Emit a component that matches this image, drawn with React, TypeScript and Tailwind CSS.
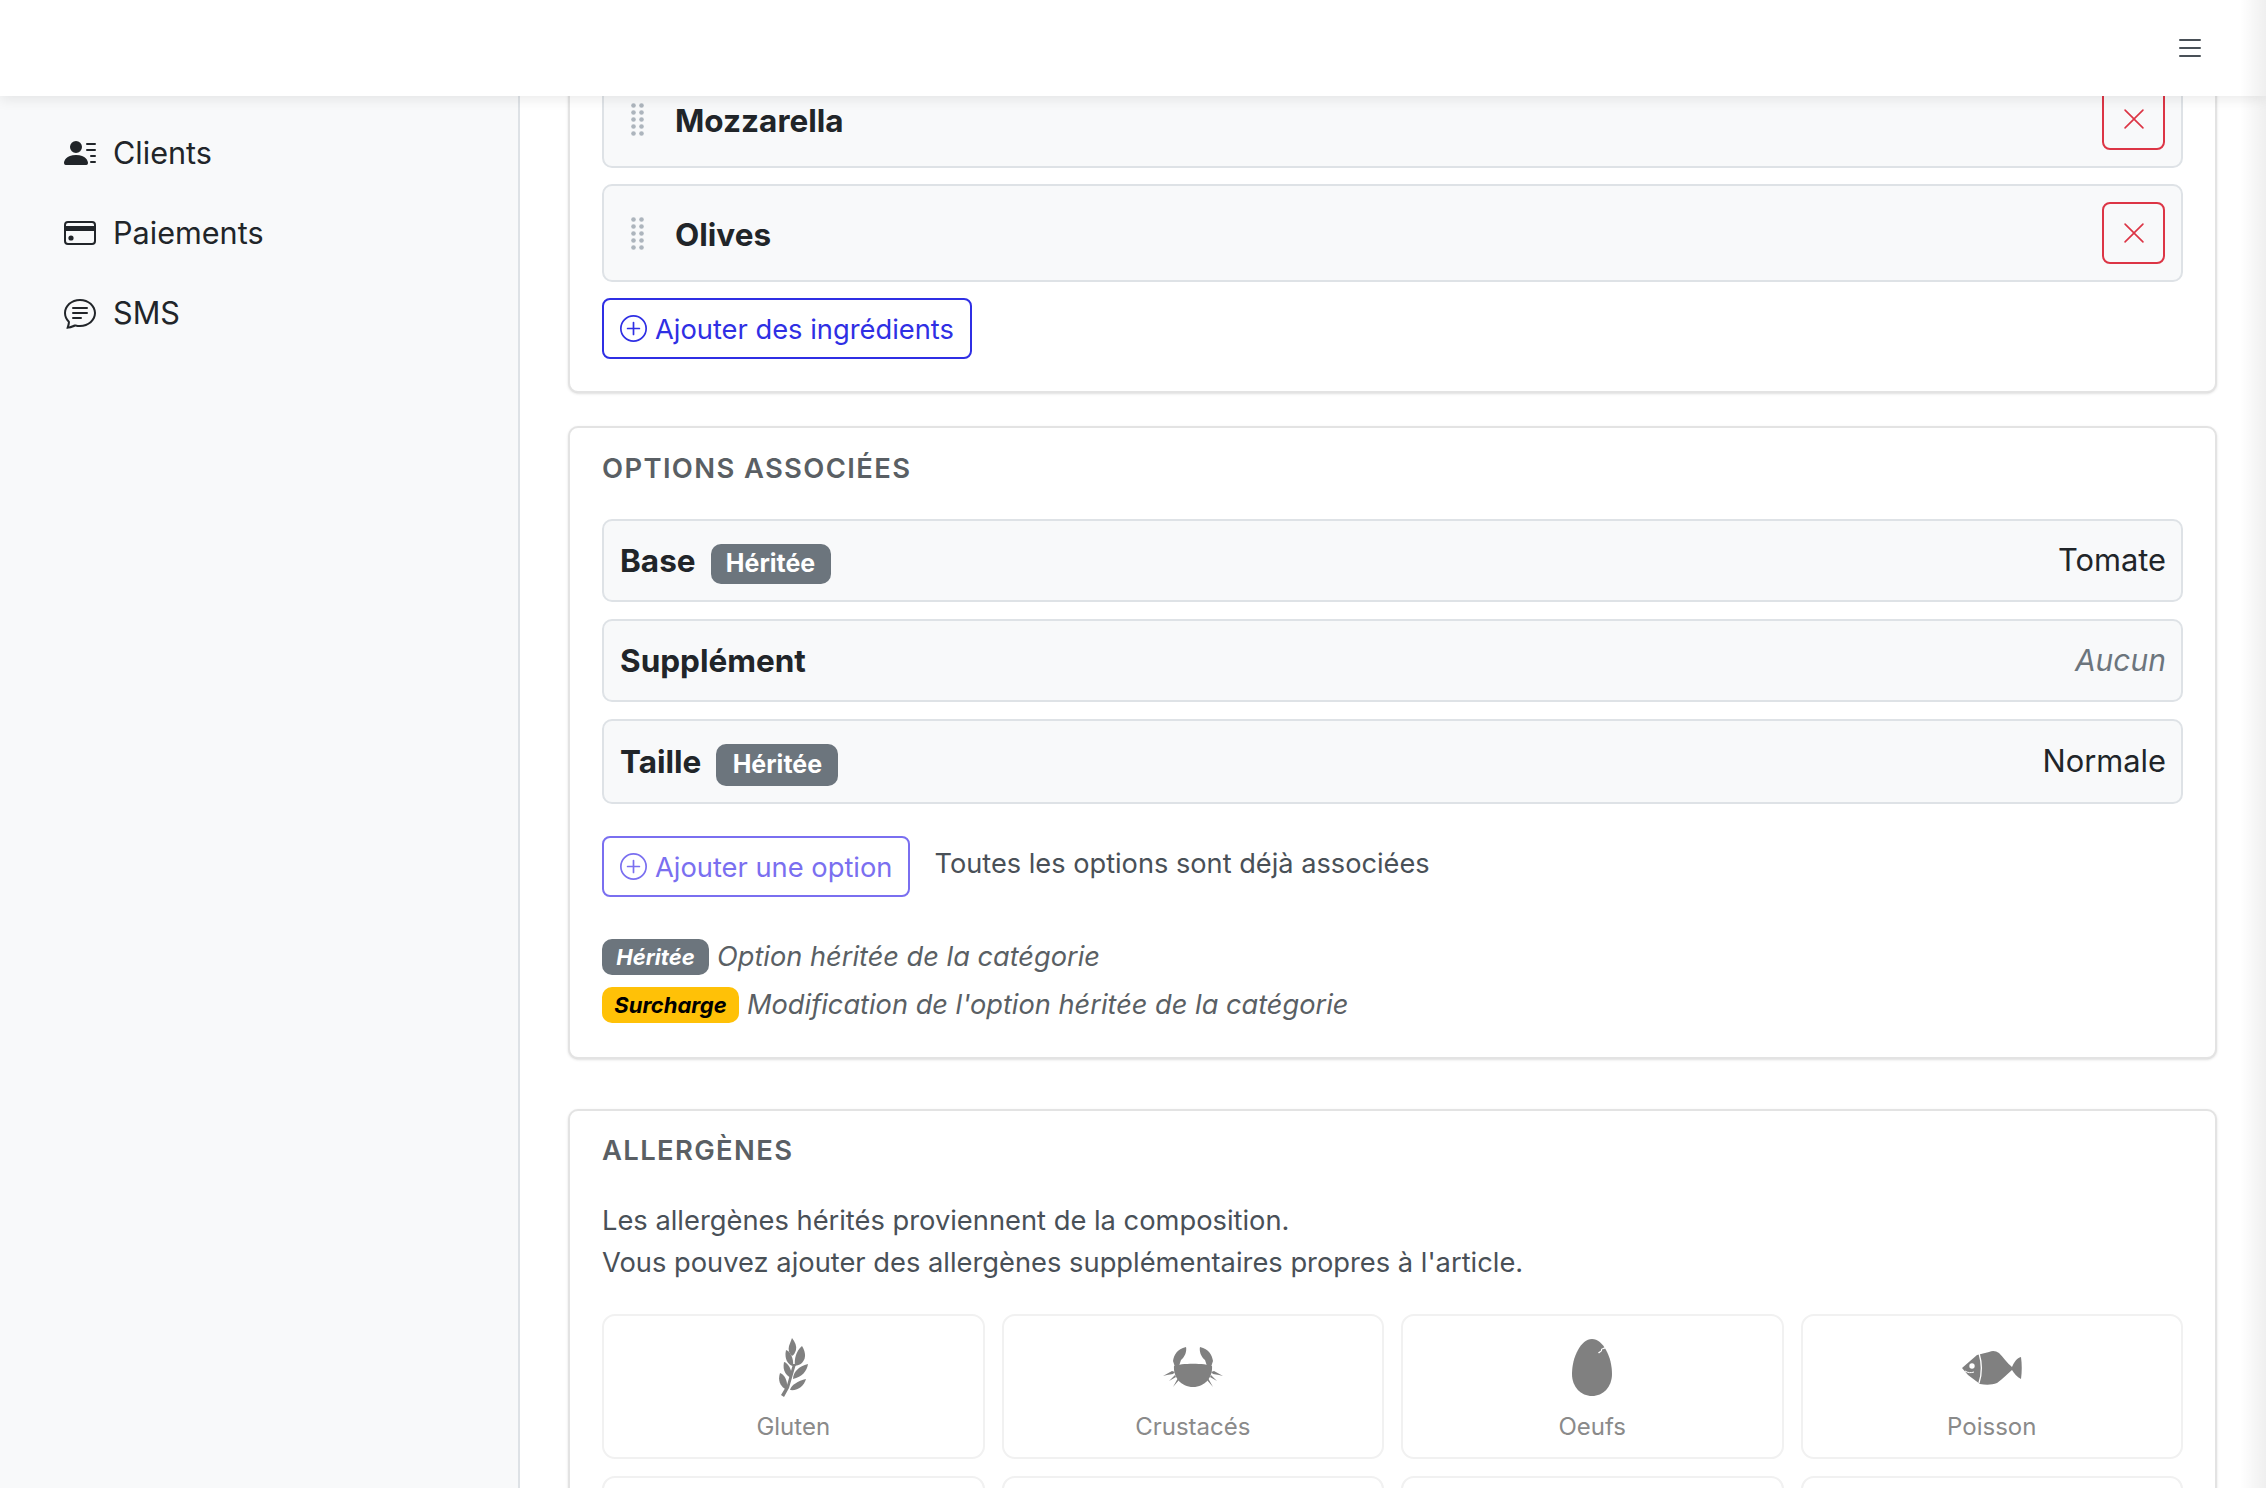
import { BsPersonLinesFill, BsChatText, BsList, BsXLg, BsPlusCircle } from "react-icons/bs";

const font = "font-['Inter','Noto_Sans',sans-serif]";

function CardIcon() {
  return (
    <svg viewBox="0 0 32 24" className="w-8 h-6 text-[#212529]" fill="none">
      <rect x="1" y="1" width="30" height="22" rx="3" stroke="currentColor" strokeWidth="2" />
      <rect x="1" y="5" width="30" height="5" fill="currentColor" />
      <circle cx="7" cy="17" r="2.6" fill="currentColor" />
    </svg>
  );
}

function Grip() {
  return (
    <svg viewBox="0 0 13 33" className="w-[13px] h-[33px] text-[#adb5bd]" fill="currentColor">
      {[2.5, 9.5, 16.5, 23.5, 30.5].map((y) => (
        <g key={y}>
          <circle cx="2.5" cy={y} r="2.3" />
          <circle cx="10.5" cy={y} r="2.3" />
        </g>
      ))}
    </svg>
  );
}

function Wheat() {
  return (
    <svg viewBox="0 0 30 59" className="w-[30px] h-[59px]" fill="#808080">
      <path d="M3 57 L6 59 L11 50 L18 26 L15 26 L9 47 Z" />
      <path d="M14 0 C17 4 19 8 18 12 C17 15 16 17 14 18 C11 15 10 12 11 8 C12 5 13 3 14 0 Z" />
      <path d="M8 12 C12 13 16 20 15 28 C10 27 6 21 8 12 Z" />
      <path d="M24 8 C27 13 28 18 26 22 C24 26 21 27 17 28 C16 21 18 13 24 8 Z" />
      <path d="M6 24 C10 25 14 31 14 40 C9 39 4 33 6 24 Z" />
      <path d="M30 26 C29 33 24 39 15 41 C15 34 21 28 30 26 Z" />
      <path d="M2 35 C7 37 10 43 9 52 C4 50 -1 44 2 35 Z" />
      <path d="M28 41 C26 48 20 53 12 52 C13 47 20 43 28 41 Z" />
    </svg>
  );
}

function Crab() {
  return (
    <svg viewBox="0 0 60 40" className="w-[60px] h-[40px]" fill="#808080">
      <path d="M11 19 C18 16 42 16 49 19 C50 30 42 40 30 40 C18 40 10 30 11 19 Z" />
      <path d="M12 20 L10 14 C11 8 14 2 23 0 C24 4 22 10 18 13 L16 19 Z" />
      <path d="M48 20 L50 14 C49 8 46 2 37 0 C36 4 38 10 42 13 L44 19 Z" />
      <path d="M0 29 L9 24 L12 25 L10 27 L4 28 Z M6 34 L12 28 L13 30 Z M10 40 L15 31 L16 33 Z" />
      <path d="M60 29 L51 24 L48 25 L50 27 L56 28 Z M54 34 L48 28 L47 30 Z M50 40 L45 31 L44 33 Z" />
    </svg>
  );
}

function Egg() {
  return (
    <svg viewBox="0 0 40 57" className="w-[40px] h-[57px]">
      <path d="M20 0 C31 0 40 18 40 35 C40 48 31 57 20 57 C9 57 0 48 0 35 C0 18 9 0 20 0 Z" fill="#808080" />
      <path d="M33 8 L29 10 L29 11.5 L26 13.5 L27 14.5 L30 12 L30 10.5 L33.5 9.5 Z" fill="#fff" />
    </svg>
  );
}

function Fish() {
  return (
    <svg viewBox="0 0 60 35" className="w-[60px] h-[35px]" fill="#808080">
      <path d="M0 18 L15 5 L27 2 C31 0 34 1 37 3 C41 7 45 13 50 17 C52 12 55 8 59 7 C60 14 60 22 59 29 C55 27 52 23 50 20 C45 24 41 29 35 33 C30 35 24 35 18 34 L6 25 Z" />
      <path d="M17 3 C20 13 20 24 17 33" stroke="#fff" strokeWidth="1.3" fill="none" />
      <circle cx="10" cy="16" r="2.7" fill="#fff" />
      <path d="M3 21 C6 23 9 23 12 22" stroke="#fff" strokeWidth="1" fill="none" />
    </svg>
  );
}

function DeleteBtn() {
  return (
    <button className="w-[63px] h-[62px] border-2 border-[#dc3545] rounded-[8px] flex items-center justify-center text-[#dc3545]">
      <BsXLg size={26} />
    </button>
  );
}

function Ingredient({ name }: { name: string }) {
  return (
    <div className="h-[98px] bg-[#f8f9fa] border-2 border-[#dee2e6] rounded-[10px] flex items-center pl-[27px] pr-[16px]">
      <Grip />
      <span className="ml-[31px] mt-[3px] text-[31.5px] font-bold text-[#212529]">{name}</span>
      <span className="ml-auto"><DeleteBtn /></span>
    </div>
  );
}

function Heritee({ className }: { className: string }) {
  return (
    <span className={`ml-[15px] mt-[7px] bg-[#6c757d] text-white font-bold rounded-[10px] flex items-center justify-center text-[25px] ${className}`}>
      Héritée
    </span>
  );
}

function OptionRow({ label, value, muted, badge, h }: { label: string; value: string; muted?: boolean; badge?: string; h: string }) {
  return (
    <div className={`bg-[#f8f9fa] border-2 border-[#dee2e6] rounded-[10px] flex items-center pl-[16px] pr-[15px] ${h}`}>
      <span className="text-[31.5px] font-bold text-[#212529]">{label}</span>
      {badge && <Heritee className={badge} />}
      <span className={`ml-auto ${muted ? "text-[30px] italic text-[#6c757d]" : "text-[30.8px] text-[#212529]"}`}>{value}</span>
    </div>
  );
}

function Tile({ label, children }: { label: string; children: React.ReactNode }) {
  return (
    <div className="h-[145px] border-2 border-[#f1f1f1] rounded-[13px] flex flex-col items-center pt-[20px]">
      <div className="h-[62px] flex items-center justify-center">{children}</div>
      <div className="mt-[14px] text-[24px] leading-[30px] text-[#8a8a8a]">{label}</div>
    </div>
  );
}

function AddBtn({ label, light }: { label: string; light?: boolean }) {
  return (
    <button className={`h-[61px] border-2 rounded-[8px] flex items-center gap-[8px] text-[27.3px] px-[16px] bg-white shrink-0 ${light ? "border-[#7a6ff0] text-[#7a6ff0]" : "border-[#2f2fe4] text-[#2f2fe4]"}`}>
      <BsPlusCircle size={27} />
      <span className="pt-[3px]">{label}</span>
    </button>
  );
}

function NavItem({ icon, label }: { icon: React.ReactNode; label: string }) {
  return (
    <div className="h-[80px] flex items-center pl-[64px] text-[#212529]">
      <span className="w-8 flex justify-center">{icon}</span>
      <span className="ml-[17px] text-[30.6px]">{label}</span>
    </div>
  );
}

export default function App() {
  return (
    <div className={`relative w-full h-[1488px] overflow-hidden flex flex-col bg-white ${font}`}>
      <header className="h-[96px] shrink-0 bg-white shadow-[0_4px_12px_rgba(0,0,0,0.08)] relative z-10 flex items-center justify-end pr-[60px]">
        <BsList size={32} className="text-[#495057]" />
      </header>
      <div className="flex-1 flex min-h-0">
        <aside className="w-[520px] shrink-0 bg-[#f8f9fa] border-r-2 border-[#dee2e6] pt-[17px]">
          <NavItem icon={<BsPersonLinesFill size={32} />} label="Clients" />
          <NavItem icon={<CardIcon />} label="Paiements" />
          <NavItem icon={<BsChatText size={32} />} label="SMS" />
        </aside>
        <main className="flex-1 min-w-0 overflow-hidden pl-[48px] pr-[49px]">
          <div className="-mt-[76px]">
            <section className="bg-white border-2 border-[#e3e3e3] rounded-[10px] shadow-sm pl-[32px] pr-[32px] pt-[48px] pb-[32px]">
              <div className="flex flex-col gap-[16px]">
                <Ingredient name="Mozzarella" />
                <Ingredient name="Olives" />
              </div>
              <div className="mt-[16px] flex"><AddBtn label="Ajouter des ingrédients" /></div>
            </section>

            <section className="mt-[33px] bg-white border-2 border-[#e3e3e3] rounded-[10px] shadow-sm pl-[32px] pr-[32px] pt-[23px] h-[633px]">
              <h2 className="text-[27.4px] leading-[34px] font-semibold tracking-[0.05em] text-[#5a5f64]">OPTIONS ASSOCIÉES</h2>
              <div className="mt-[34px] flex flex-col gap-[17px]">
                <OptionRow label="Base" value="Tomate" badge="w-[120px] h-[40px]" h="h-[83px]" />
                <OptionRow label="Supplément" value="Aucun" muted h="h-[83px]" />
                <OptionRow label="Taille" value="Normale" badge="w-[122px] h-[42px]" h="h-[85px]" />
              </div>
              <div className="mt-[32px] flex items-start">
                <AddBtn label="Ajouter une option" light />
                <span className="ml-[24px] mt-[8px] text-[27.2px] text-[#495057]">Toutes les options sont déjà associées</span>
              </div>
              <div className="mt-[42px] flex items-center h-[36px]">
                <span className="w-[107px] h-[36px] bg-[#6c757d] rounded-[10px] flex items-center justify-center text-white font-bold italic text-[22px]">Héritée</span>
                <span className="ml-[8px] text-[27.2px] italic text-[#5a5f64]">Option héritée de la catégorie</span>
              </div>
              <div className="mt-[12px] flex items-center h-[36px]">
                <span className="w-[137px] h-[36px] bg-[#ffc107] rounded-[10px] flex items-center justify-center text-black font-bold italic text-[22px]">Surcharge</span>
                <span className="ml-[8px] text-[27.2px] italic text-[#5a5f64]">Modification de l'option héritée de la catégorie</span>
              </div>
            </section>

            <section className="mt-[50px] bg-white border-2 border-[#e3e3e3] rounded-[10px] shadow-sm pl-[32px] pr-[32px] pt-[22px] pb-[32px]">
              <h2 className="text-[27.4px] leading-[34px] font-semibold tracking-[0.05em] text-[#5a5f64]">ALLERGÈNES</h2>
              <p className="mt-[33px] text-[27.3px] leading-[42px] text-[#495057]">
                Les allergènes hérités proviennent de la composition.
                <br />
                Vous pouvez ajouter des allergènes supplémentaires propres à l'article.
              </p>
              <div className="mt-[30px] grid grid-cols-4 gap-[17px]">
                <Tile label="Gluten"><Wheat /></Tile>
                <Tile label="Crustacés"><Crab /></Tile>
                <Tile label="Oeufs"><Egg /></Tile>
                <Tile label="Poisson"><Fish /></Tile>
                <div className="h-[145px] border-2 border-[#f1f1f1] rounded-[13px]" />
                <div className="h-[145px] border-2 border-[#f1f1f1] rounded-[13px]" />
                <div className="h-[145px] border-2 border-[#f1f1f1] rounded-[13px]" />
                <div className="h-[145px] border-2 border-[#f1f1f1] rounded-[13px]" />
              </div>
            </section>
          </div>
        </main>
      </div>
      {/* scrollbar fade on the right edge */}
      <div className="absolute top-0 right-0 bottom-0 w-[26px] z-20 pointer-events-none bg-gradient-to-r from-transparent to-[#00000010]" />
    </div>
  );
}
